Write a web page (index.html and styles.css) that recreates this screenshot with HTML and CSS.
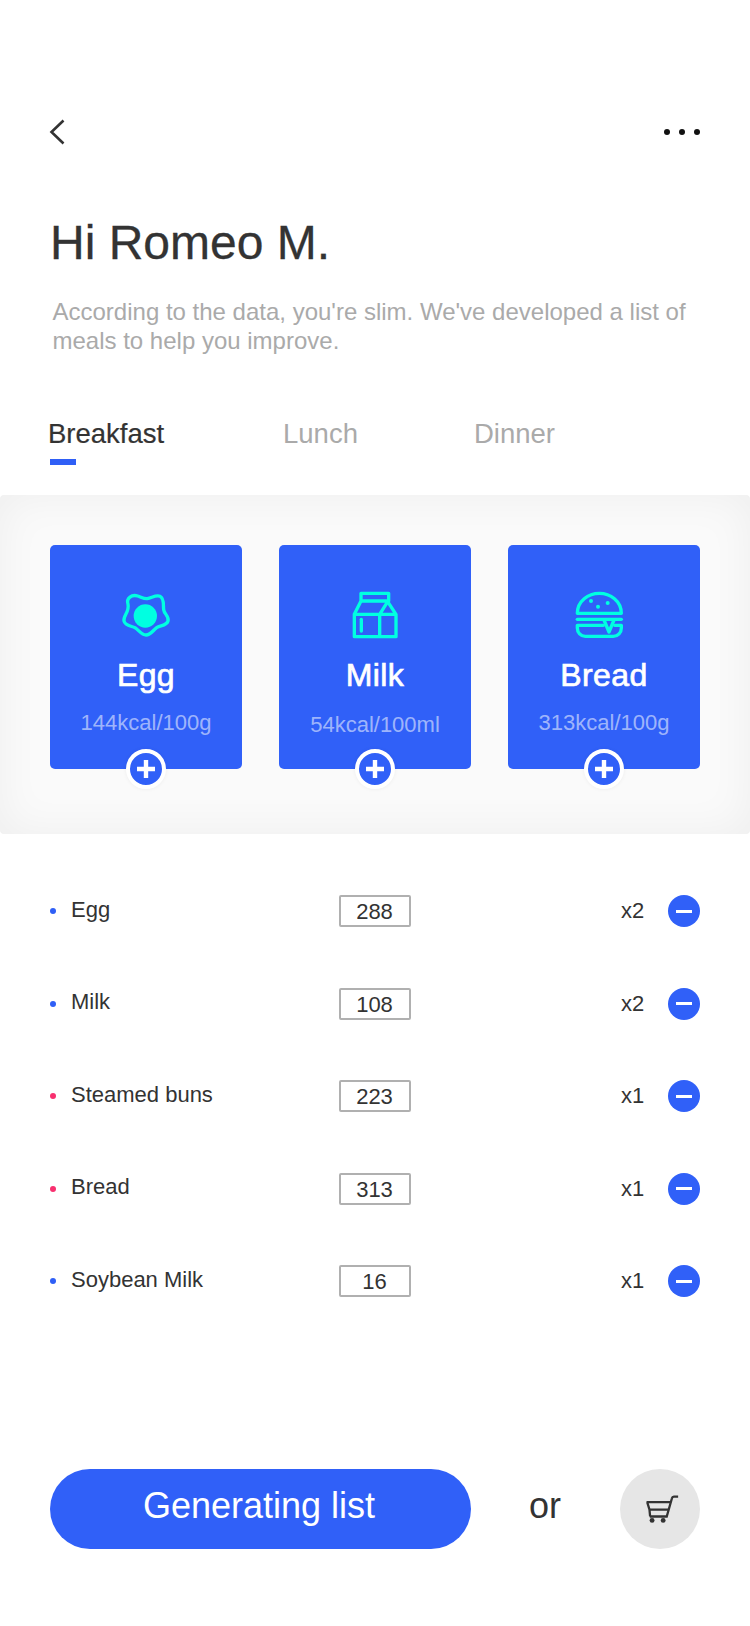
FILE: index.html
```html
<!DOCTYPE html>
<html lang="en">
<head>
<meta charset="utf-8">
<title>Meal list</title>
<link rel="stylesheet" href="styles.css">
</head>
<body>
<main class="page">
  <header class="topbar">
    <svg class="back" viewBox="0 0 16 26" width="16" height="26"><path d="M14.5 1.5 2.5 13l12 11.5" fill="none" stroke="#333" stroke-width="2.6"/></svg>
    <div class="more"><i></i><i></i><i></i></div>
  </header>
  <h1 class="title">Hi Romeo M.</h1>
  <p class="intro">According to the data, you're slim. We've developed a list of meals to help you improve.</p>
  <nav class="tabs">
    <a class="tab tab-active">Breakfast</a>
    <a class="tab tab-lunch">Lunch</a>
    <a class="tab tab-dinner">Dinner</a>
  </nav>
  <section class="panel">
    <article class="card">
      <svg class="food" viewBox="48 45 180 180" width="60" height="60"><path d="M84 100C78 80 96 70 113 75 125 79 132 84 142 83 155 81 168 71 180 76 194 82 189 105 191 116 193 130 208 136 204 150 200 165 180 163 170 170 160 177 152 192 138 192 125 192 115 176 105 170 95 165 75 165 72 150 69 135 89 122 84 100Z" fill="none" stroke="#00ffe1" stroke-width="10"/><circle cx="136" cy="135" r="35" fill="#00ffe1"/></svg>
      <h2 class="name">Egg</h2>
      <p class="kcal">144kcal/100g</p>
      <button class="add"><svg viewBox="0 0 32 32" width="32" height="32"><path d="M16 7v18M7 16h18" stroke="#fff" stroke-width="4.4"/></svg></button>
    </article>
    <article class="card">
      <svg class="food" viewBox="45 30 180 180" width="60" height="60"><g fill="none" stroke="#00ffe1" stroke-width="10" stroke-linejoin="round"><path d="M93 52h83v23H93zM93 75 73 115v67h125v-67l-25-38M73 115h125M149 115v67M149 115l24-38"/><path d="M94 130v35" stroke-linecap="round"/></g></svg>
      <h2 class="name">Milk</h2>
      <p class="kcal kcal-low">54kcal/100ml</p>
      <button class="add"><svg viewBox="0 0 32 32" width="32" height="32"><path d="M16 7v18M7 16h18" stroke="#fff" stroke-width="4.4"/></svg></button>
    </article>
    <article class="card">
      <svg class="food" viewBox="42 30 180 180" width="60" height="60"><g fill="none" stroke="#00ffe1" stroke-width="10" stroke-linecap="round" stroke-linejoin="round"><path d="M52 112C52 75 85 52 118 52s66 23 66 60Z"/><path d="M52 130h132"/><path d="M130 148H52v8c0 14 10 25 24 25h84c14 0 24-11 24-25v-8h-20"/><path d="M132 132l15 36 15-36"/></g><g fill="#00ffe1"><circle cx="93" cy="75" r="6"/><circle cx="143" cy="81" r="6"/><circle cx="114" cy="92" r="6"/></g></svg>
      <h2 class="name">Bread</h2>
      <p class="kcal">313kcal/100g</p>
      <button class="add"><svg viewBox="0 0 32 32" width="32" height="32"><path d="M16 7v18M7 16h18" stroke="#fff" stroke-width="4.4"/></svg></button>
    </article>
  </section>
  <ul class="list">
    <li class="row"><span class="item"><i class="dot"></i>Egg</span><span class="amount">288</span><span class="qty">x2</span><button class="remove"></button></li>
    <li class="row"><span class="item"><i class="dot"></i>Milk</span><span class="amount">108</span><span class="qty">x2</span><button class="remove"></button></li>
    <li class="row"><span class="item"><i class="dot dot-red"></i>Steamed buns</span><span class="amount">223</span><span class="qty">x1</span><button class="remove"></button></li>
    <li class="row"><span class="item"><i class="dot dot-red"></i>Bread</span><span class="amount">313</span><span class="qty">x1</span><button class="remove"></button></li>
    <li class="row"><span class="item"><i class="dot"></i>Soybean Milk</span><span class="amount">16</span><span class="qty">x1</span><button class="remove"></button></li>
  </ul>
  <footer class="actions">
    <button class="generate">Generating list</button>
    <span class="or">or</span>
    <button class="cart"><svg viewBox="440 133 100 86" width="33" height="28"><g fill="none" stroke="#333" stroke-width="7"><path d="M538 138h-13q-5 0-6 5l-16 56h-52"/><path d="M441 155h73M443 155l7 23h58M450 178l2 21"/></g><circle cx="458" cy="211" r="7.5" fill="#333"/><circle cx="492" cy="211" r="7.5" fill="#333"/></svg></button>
  </footer>
</main>
</body>
</html>
```
FILE: styles.css
```css
* { box-sizing: border-box; }
html, body { margin: 0; padding: 0; background: #fff; }
body { font-family: "Liberation Sans", Arial, sans-serif; color: #333; }
.page { width: 750px; height: 1626px; padding-top: 119px; overflow: hidden; }
.topbar { display: flex; justify-content: space-between; align-items: center; padding: 0 50px 0 49px; height: 26px; }
.more { display: flex; gap: 9px; }
.more i { width: 6px; height: 6px; border-radius: 50%; background: #111; }
.title { margin: 72px 0 0 50px; font-size: 48px; line-height: 52px; font-weight: 400; color: #333; -webkit-text-stroke: .3px #333; }
.intro { margin: 28px 50px 0 52.5px; font-size: 24px; line-height: 29px; color: #aaa; }
.tabs { display: flex; margin: 59px 0 0 48px; height: 81px; font-size: 27.5px; line-height: 40px; }
.tab { color: #aaa; position: relative; }
.tab-active { color: #333; width: 235px; -webkit-text-stroke: .2px #333; }
.tab-active::after { content: ""; position: absolute; left: 2px; top: 45px; width: 26px; height: 6px; background: #2f5ff6; }
.tab-lunch { width: 191px; }
.panel { display: flex; gap: 37px; height: 339px; padding: 50px 50px 0; border-radius: 4px; background: #fafafa; box-shadow: inset 0 0 44px rgba(0, 0, 0, .05); }
.card { position: relative; flex: 1; height: 224px; padding-top: 41px; border-radius: 5px; background: #3060f8; text-align: center; }
.food { display: block; margin: 0 auto; }
.name { margin: 10px 0 0; font-size: 32px; line-height: 38px; font-weight: 400; letter-spacing: .4px; color: #fff; -webkit-text-stroke: .7px #fff; }
.kcal { margin: 16px 0 0; font-size: 22px; line-height: 26px; color: rgba(255, 255, 255, .55); }
.kcal-low { margin-top: 18px; }
.add { position: absolute; left: 50%; bottom: -20px; width: 40px; height: 40px; margin-left: -20px; padding: 0; display: flex; align-items: center; justify-content: center; border: 4px solid #fff; border-radius: 50%; background: #3060f8; box-shadow: 0 0 4px rgba(0, 0, 0, .06); }
.list { list-style: none; margin: 61px 0 0; padding: 0 50px; display: flex; flex-direction: column; gap: 60.5px; }
.row { display: grid; grid-template-columns: 289px 72px 1fr 32px; height: 32px; align-items: center; }
.item { display: flex; align-items: center; font-size: 22px; line-height: 26px; padding-bottom: 3px; }
.dot { width: 6px; height: 6px; margin: 3px 15px 0 0; border-radius: 50%; background: #2f5ff6; }
.dot-red { background: #f8306f; }
.amount { height: 32px; padding-right: 1px; border: 2px solid #b0b0b0; border-radius: 2px; font-size: 22px; line-height: 29px; text-align: center; }
.qty { padding-left: 210px; font-size: 22px; line-height: 26px; }
.remove { position: relative; width: 32px; height: 32px; padding: 0; border: 0; border-radius: 50%; background: #3060f8; }
.remove::after { content: ""; position: absolute; left: 8px; top: 14.5px; width: 16px; height: 3px; background: #fff; }
.actions { display: flex; align-items: center; margin: 172px 0 0; padding: 0 50px; }
.generate { width: 421px; height: 80px; padding: 0 3px 7px 0; border: 0; border-radius: 40px; background: #3060f8; color: #fff; font-family: "Liberation Sans", Arial, sans-serif; font-size: 36px; }
.or { margin-left: 58px; width: 91px; padding-bottom: 7px; font-size: 36px; color: #333; }
.cart { display: flex; align-items: center; justify-content: center; width: 80px; height: 80px; padding: 0 0 0 5px; border: 0; border-radius: 50%; background: #e6e6e6; }
```
